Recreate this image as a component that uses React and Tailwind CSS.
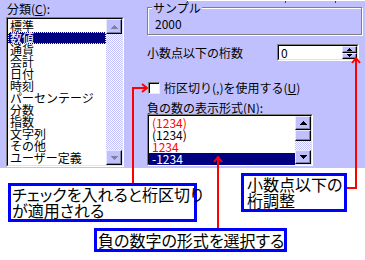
import React from "react";

function Btn({ children, className = "" }) {
  return (
    <div
      className={`flex items-center justify-center bg-[#c0c0ff] border border-t-[#e8e8ff] border-l-[#e8e8ff] border-b-black border-r-black shadow-[inset_-1px_-1px_#8080a0] ${className}`}
    >
      {children}
    </div>
  );
}

function Tri({ up = true, color = "#000", w = 7, h = 4 }) {
  return (
    <svg width={w} height={h} viewBox={`0 0 ${w} ${h}`} shapeRendering="crispEdges">
      {up ? (
        <path d={`M${w / 2} 0 L${w} ${h} L0 ${h}Z`} fill={color} />
      ) : (
        <path d={`M0 0 L${w} 0 L${w / 2} ${h}Z`} fill={color} />
      )}
    </svg>
  );
}

const cats = [
  "標準",
  "数値",
  "通貨",
  "会計",
  "日付",
  "時刻",
  "パーセンテージ",
  "分数",
  "指数",
  "文字列",
  "その他",
  "ユーザー定義",
];

const negs = [
  { t: "(1234)", c: "text-[#ff0000]" },
  { t: "(1234)", c: "text-black" },
  { t: "1234", c: "text-[#ff0000]" },
  { t: "-1234", c: "sel" },
];

export default function App() {
  return (
    <div className="relative w-[365px] h-[260px] overflow-hidden bg-white text-black font-['Noto_Sans_CJK_JP','Noto_Sans_CJK_SC',sans-serif]">
      {/* dialog area */}
      <div className="flex h-[168px] bg-[#c0c0ff] text-[12px] leading-[12px]">
        {/* left column */}
        <div className="w-[147px] shrink-0 pl-[6px] pt-[3px]">
          <div className="ml-[1px] h-[14px]">
            分類(<span className="underline">C</span>):
          </div>
          <div className="flex w-[118px] h-[150px] border border-t-[#808080] border-l-[#808080] border-b-white border-r-white">
            <div className="flex flex-1 border border-t-black border-l-black border-b-[#e0e0ff] border-r-[#e0e0ff]">
              <div className="flex-1 bg-white pt-[1px]">
                {cats.map((c, i) => (
                  <div
                    key={i}
                    className={
                      i === 1
                        ? "h-[12px] pl-[2px] whitespace-nowrap bg-[#000080] text-white outline-1 outline-dotted outline-[#ffff80] -outline-offset-1"
                        : "h-[12px] pl-[2px] whitespace-nowrap"
                    }
                  >
                    {c}
                  </div>
                ))}
              </div>
              <div className="flex w-[16px] flex-col bg-[repeating-conic-gradient(#c0c0ff_0_25%,#ffffff_0_50%)] bg-[length:2px_2px]">
                <Btn className="h-[15px]">
                  <Tri up color="#8080a0" />
                </Btn>
                <div className="flex-1" />
                <Btn className="h-[15px]">
                  <Tri up={false} color="#8080a0" />
                </Btn>
              </div>
            </div>
          </div>
        </div>

        {/* right column */}
        <div className="flex flex-1 flex-col pr-[3px]">
          {/* bottom edge of the controls above (cropped) */}
          <div className="ml-[40px] -mr-[3px] flex h-[2px] border-t border-white">
            <div className="h-[2px] w-[1px] bg-[#404040]" />
            <div className="ml-[97px] h-[2px] w-[1px] bg-[#404040]" />
            <div className="ml-[49px] h-[2px] w-[1px] bg-[#404040]" />
          </div>

          <div className="relative mt-[5px] h-[28px] border border-[#808080] shadow-[inset_1px_1px_#ffffff,1px_1px_#ffffff]">
            <span className="absolute left-[4px] -top-[6px] bg-[#c0c0ff] px-[1px]">
              サンプル
            </span>
            <div className="pl-[7px] pt-[10px]">2000</div>
          </div>

          <div className="mt-[9px] flex h-[17px] items-center justify-between pr-[3px]">
            <span>小数点以下の桁数</span>
            <div className="flex w-[82px] h-[17px] border border-t-[#808080] border-l-[#808080] border-b-white border-r-white">
              <div className="flex flex-1 bg-white border border-t-black border-l-black border-b-[#e0e0ff] border-r-[#e0e0ff]">
                <div className="flex flex-1 items-center pl-[2px]">0</div>
                <div className="flex w-[15px] flex-col">
                  <Btn className="flex-1">
                    <Tri up w={5} h={3} />
                  </Btn>
                  <Btn className="flex-1">
                    <Tri up={false} w={5} h={3} />
                  </Btn>
                </div>
              </div>
            </div>
          </div>

          <div className="mt-[21px] flex h-[12px] items-center">
            <div className="ml-[1px] h-[12px] w-[12px] bg-white border border-t-[#808080] border-l-[#808080] border-b-[#e8e8ff] border-r-[#e8e8ff] shadow-[inset_1px_1px_#000000]" />
            <span className="ml-[4px] whitespace-nowrap">
              桁区切り(,)を使用する(<span className="underline">U</span>)
            </span>
          </div>

          <div className="mt-[8px] h-[12px] whitespace-nowrap">
            負の数の表示形式(<span className="underline">N</span>):
          </div>

          <div className="flex w-[166px] h-[52px] border border-t-[#808080] border-l-[#808080] border-b-white border-r-white">
            <div className="flex flex-1 border border-t-black border-l-black border-b-[#e0e0ff] border-r-[#e0e0ff]">
              <div className="flex-1 bg-white pt-[1px]">
                {negs.map((n, i) => (
                  <div
                    key={i}
                    className={
                      n.c === "sel"
                        ? "h-[12px] pl-[3px] bg-[#000080] text-white"
                        : `h-[12px] pl-[3px] ${n.c}`
                    }
                  >
                    {n.t}
                  </div>
                ))}
              </div>
              <div className="flex w-[16px] flex-col bg-[repeating-conic-gradient(#c0c0ff_0_25%,#ffffff_0_50%)] bg-[length:2px_2px]">
                <Btn className="h-[14px]">
                  <Tri up />
                </Btn>
                <Btn className="h-[11px]" />
                <div className="flex-1" />
                <Btn className="h-[14px]">
                  <Tri up={false} />
                </Btn>
              </div>
            </div>
          </div>
        </div>
      </div>

      {/* annotations */}
      <div className="flex flex-col text-[16px] leading-[16px] [font-feature-settings:'palt']">
        <div className="flex items-start justify-between">
          <div className="ml-[8px] mt-[15px] h-[39px] w-[189px] border-[3px] border-[#0000ff] pl-[1px] whitespace-nowrap">
            チェックを入れると桁区切り
            <br />
            が適用される
          </div>
          <div className="mr-[18px] mt-[5px] h-[39px] w-[106px] border-[3px] border-[#0000ff] pl-[3px] whitespace-nowrap">
            小数点以下の
            <br />
            桁調整
          </div>
        </div>
        <div className="ml-[94px] mt-[6px] h-[24px] w-[193px] border-[3px] border-[#0000ff] pl-[1px] leading-[18px] whitespace-nowrap">
          負の数字の形式を選択する
        </div>
      </div>

      {/* connectors */}
      <svg
        className="pointer-events-none absolute left-0 top-0"
        width="365"
        height="260"
        viewBox="0 0 365 260"
        fill="none"
        stroke="#ff0000"
        strokeWidth="2"
      >
        <polyline points="133,183 133,88 147,88" />
        <polyline points="142,84 147,88 142,92" />
        <polyline points="218,228 218,157" />
        <polyline points="214,162 218,157 222,162" />
        <polyline points="347,188 356,188 356,58" />
        <polyline points="352,63 356,58 360,63" />
      </svg>
    </div>
  );
}
